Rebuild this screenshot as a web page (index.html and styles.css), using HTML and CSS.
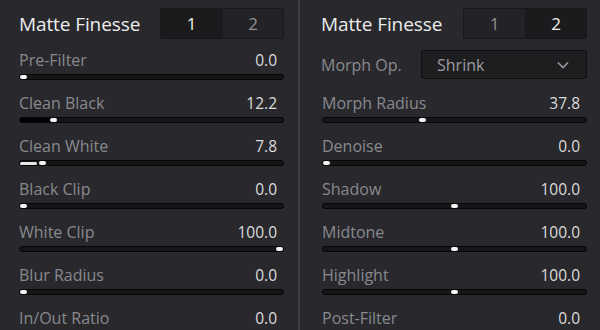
FILE: index.html
```html
<!DOCTYPE html>
<html>
<head>
<meta charset="utf-8">
<link rel="stylesheet" href="styles.css">
</head>
<body>
<div class="app">
  <section class="panel panel-left">
    <header class="head">
      <h1 class="title">Matte Finesse</h1>
      <div class="tabs">
        <div class="tab active">1</div>
        <div class="tab">2</div>
      </div>
    </header>
    <div class="row"><div class="line"><span class="label">Pre-Filter</span><span class="value">0.0</span></div>
      <div class="track"><span class="handle" style="left:0px"></span></div></div>
    <div class="row"><div class="line"><span class="label">Clean Black</span><span class="value">12.2</span></div>
      <div class="track"><span class="fill dark" style="width:32px"></span><span class="handle" style="left:30px"></span></div></div>
    <div class="row"><div class="line"><span class="label">Clean White</span><span class="value">7.8</span></div>
      <div class="track"><span class="fill light" style="width:17px"></span><span class="handle" style="left:19px"></span></div></div>
    <div class="row"><div class="line"><span class="label">Black Clip</span><span class="value">0.0</span></div>
      <div class="track"><span class="handle" style="left:0px"></span></div></div>
    <div class="row"><div class="line"><span class="label">White Clip</span><span class="value">100.0</span></div>
      <div class="track"><span class="handle" style="left:256px"></span></div></div>
    <div class="row"><div class="line"><span class="label">Blur Radius</span><span class="value">0.0</span></div>
      <div class="track"><span class="handle" style="left:0px"></span></div></div>
    <div class="row"><div class="line"><span class="label">In/Out Ratio</span><span class="value">0.0</span></div>
      <div class="track"><span class="handle" style="left:0px"></span></div></div>
  </section>
  <div class="divider"></div>
  <section class="panel panel-right">
    <header class="head">
      <h1 class="title">Matte Finesse</h1>
      <div class="tabs">
        <div class="tab">1</div>
        <div class="tab active">2</div>
      </div>
    </header>
    <div class="select-row">
      <span class="label">Morph Op.</span>
      <div class="select"><span class="select-text">Shrink</span>
        <svg class="chev" width="12" height="8" viewBox="0 0 12 8"><path d="M1 1.5 L6 6.5 L11 1.5" fill="none" stroke="#9a9a9e" stroke-width="1.6"/></svg>
      </div>
    </div>
    <div class="row"><div class="line"><span class="label">Morph Radius</span><span class="value">37.8</span></div>
      <div class="track"><span class="handle" style="left:96px"></span></div></div>
    <div class="row"><div class="line"><span class="label">Denoise</span><span class="value">0.0</span></div>
      <div class="track"><span class="handle" style="left:0px"></span></div></div>
    <div class="row"><div class="line"><span class="label">Shadow</span><span class="value">100.0</span></div>
      <div class="track"><span class="handle" style="left:128px"></span></div></div>
    <div class="row"><div class="line"><span class="label">Midtone</span><span class="value">100.0</span></div>
      <div class="track"><span class="handle" style="left:128px"></span></div></div>
    <div class="row"><div class="line"><span class="label">Highlight</span><span class="value">100.0</span></div>
      <div class="track"><span class="handle" style="left:128px"></span></div></div>
    <div class="row"><div class="line"><span class="label">Post-Filter</span><span class="value">0.0</span></div>
      <div class="track"><span class="handle" style="left:0px"></span></div></div>
  </section>
</div>
</body>
</html>
```
FILE: styles.css
```css
* { box-sizing: border-box; }
html, body { margin: 0; padding: 0; }
body {
  width: 600px;
  height: 330px;
  overflow: hidden;
  background: #28282d;
  font-family: "Open Sans", "Noto Sans", sans-serif;
}
.app {
  display: flex;
  height: 330px;
  overflow: hidden;
}
.panel {
  display: flex;
  flex-direction: column;
  padding-top: 8px;
  overflow: hidden;
}
.panel-left {
  width: 298px;
  padding-left: 19px;
  padding-right: 14px;
}
.panel-right {
  width: 300px;
  padding-left: 22px;
  padding-right: 13px;
}
.divider {
  width: 2px;
  background: #3e3e44;
}
.head {
  display: flex;
  align-items: center;
  justify-content: space-between;
  height: 31px;
  flex: none;
  margin-bottom: 10px;
}
.panel-right .head { margin-bottom: 11px; margin-left: -1px; }
.title {
  margin: 0;
  font-size: 19px;
  font-weight: 400;
  color: #ececec;
  letter-spacing: -0.1px;
}
.tabs {
  display: flex;
  height: 31px;
  border: 1px solid #18181a;
  border-radius: 2px;
  background: #18181a;
}
.tab {
  width: 61px;
  display: flex;
  align-items: center;
  justify-content: center;
  font-size: 17px;
  color: #8e8e92;
  background: #232327;
}
.tab + .tab { border-left: 1px solid #18181a; }
.tab.active {
  background: #1b1b1d;
  color: #f2f2f2;
}
.row {
  display: flex;
  flex-direction: column;
  height: 43px;
  flex: none;
}
.line {
  display: flex;
  justify-content: space-between;
  align-items: center;
  height: 22px;
  padding-right: 7px;
  margin-bottom: 3px;
}
.label {
  font-size: 16px;
  color: #898a8e;
}
.value {
  font-size: 15.5px;
  color: #dcdcdc;
}
.track {
  position: relative;
  height: 6px;
  background: #161618;
  border: 1px solid #050506;
  border-radius: 3px;
}
.fill {
  position: absolute;
  left: 0;
  top: 0;
  bottom: 0;
  border-radius: 2px;
}
.fill.dark { background: #000; }
.fill.light { background: #e6e6e6; top: 0.5px; bottom: 0.5px; }
.handle {
  position: absolute;
  top: 0;
  width: 7px;
  height: 4px;
  background: #f4f4f4;
  border-radius: 2px;
}
.select-row {
  display: flex;
  align-items: center;
  justify-content: space-between;
  height: 29px;
  flex: none;
  margin-bottom: 13px;
  margin-left: -1px;
}
.select {
  width: 166px;
  height: 29px;
  display: flex;
  align-items: center;
  justify-content: space-between;
  padding: 0 17px 0 15px;
  background: #1e1e21;
  border: 1px solid #0f0f10;
  border-radius: 3px;
}
.select-text {
  font-size: 16px;
  color: #9c9ca0;
}
.chev { display: block; }
```
